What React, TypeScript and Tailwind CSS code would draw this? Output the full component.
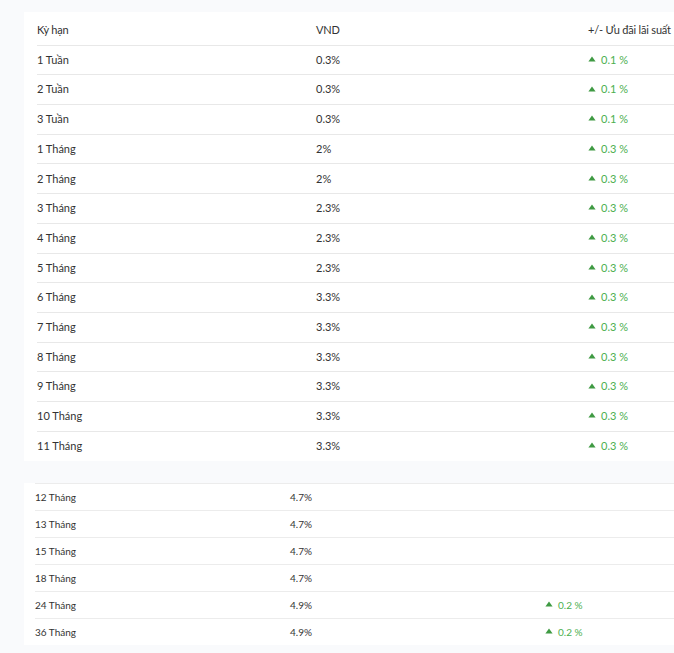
import React from 'react';

type Row = { term: string; rate: string; bonus?: string };

const shortTerms: Row[] = [
  { term: '1 Tuần', rate: '0.3%', bonus: '0.1 %' },
  { term: '2 Tuần', rate: '0.3%', bonus: '0.1 %' },
  { term: '3 Tuần', rate: '0.3%', bonus: '0.1 %' },
  { term: '1 Tháng', rate: '2%', bonus: '0.3 %' },
  { term: '2 Tháng', rate: '2%', bonus: '0.3 %' },
  { term: '3 Tháng', rate: '2.3%', bonus: '0.3 %' },
  { term: '4 Tháng', rate: '2.3%', bonus: '0.3 %' },
  { term: '5 Tháng', rate: '2.3%', bonus: '0.3 %' },
  { term: '6 Tháng', rate: '3.3%', bonus: '0.3 %' },
  { term: '7 Tháng', rate: '3.3%', bonus: '0.3 %' },
  { term: '8 Tháng', rate: '3.3%', bonus: '0.3 %' },
  { term: '9 Tháng', rate: '3.3%', bonus: '0.3 %' },
  { term: '10 Tháng', rate: '3.3%', bonus: '0.3 %' },
  { term: '11 Tháng', rate: '3.3%', bonus: '0.3 %' },
];

const longTerms: Row[] = [
  { term: '12 Tháng', rate: '4.7%' },
  { term: '13 Tháng', rate: '4.7%' },
  { term: '15 Tháng', rate: '4.7%' },
  { term: '18 Tháng', rate: '4.7%' },
  { term: '24 Tháng', rate: '4.9%', bonus: '0.2 %' },
  { term: '36 Tháng', rate: '4.9%', bonus: '0.2 %' },
];

const Up = () => (
  <svg width="8" height="6" viewBox="0 0 8 6" className="mr-[5px] mb-[2px] shrink-0">
    <path d="M4 0.5 L7.6 5.5 L0.4 5.5 Z" fill="#3f9a43" />
  </svg>
);

const Bonus: React.FC<{ value?: string }> = ({ value }) =>
  value ? (
    <span className="flex items-center text-[#4caf50]">
      <Up />
      {value}
    </span>
  ) : null;

export default function App() {
  return (
    <div
      className="min-h-[653px] overflow-hidden bg-[#f9fafc] pt-3 text-[#333]"
      style={{ fontFamily: 'Lato, "Open Sans", sans-serif' }}
    >
      {/* short terms */}
      <div className="ml-6 overflow-hidden bg-white pl-[13px] pt-[4px] text-[11px]">
        <div className="grid grid-cols-[279px_272px_275px] h-[29.7px] items-center border-b border-[#e8e8e8] tracking-[-0.2px]">
          <span>Kỳ hạn</span>
          <span>VND</span>
          <span>+/- Ưu đãi lãi suất</span>
        </div>
        {shortTerms.map((r, i) => (
          <div
            key={r.term}
            className={`grid grid-cols-[279px_272px_275px] h-[29.7px] items-center ${
              i < shortTerms.length - 1 ? 'border-b border-[#e8e8e8]' : ''
            }`}
          >
            <span>{r.term}</span>
            <span>{r.rate}</span>
            <Bonus value={r.bonus} />
          </div>
        ))}
      </div>

      {/* long terms */}
      <div className="ml-6 mt-[22px] overflow-hidden bg-white pl-[11px] text-[10px]">
        {longTerms.map((r) => (
          <div
            key={r.term}
            className="grid grid-cols-[255px_255px_255px] h-[27px] items-center border-t border-[#ececec]"
          >
            <span>{r.term}</span>
            <span>{r.rate}</span>
            <Bonus value={r.bonus} />
          </div>
        ))}
      </div>
    </div>
  );
}
